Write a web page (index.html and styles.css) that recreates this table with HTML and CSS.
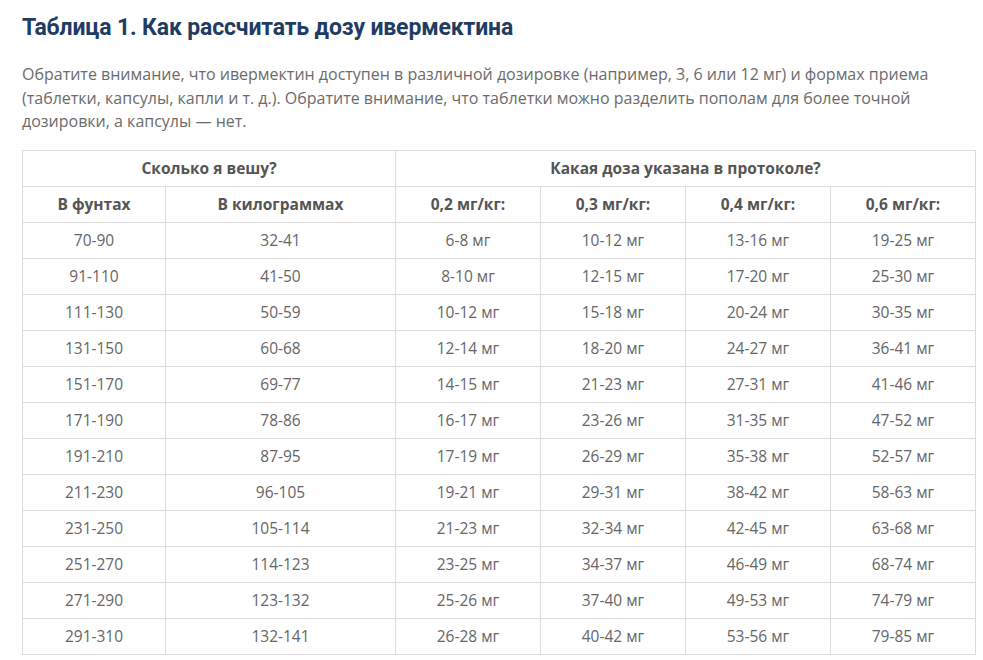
FILE: index.html
```html
<!DOCTYPE html>
<html lang="ru">
<head>
<meta charset="utf-8">
<link rel="stylesheet" href="styles.css">
</head>
<body>
<div class="page">
  <h2 class="title">Таблица 1. Как рассчитать дозу ивермектина</h2>
  <p class="intro">Обратите внимание, что ивермектин доступен в различной дозировке (например, 3, 6 или 12 мг) и формах приема (таблетки, капсулы, капли и т. д.). Обратите внимание, что таблетки можно разделить пополам для более точной дозировки, а капсулы — нет.</p>
  <table class="dose">
    <colgroup>
      <col class="c1"><col class="c2"><col class="c3"><col class="c3"><col class="c3"><col class="c3">
    </colgroup>
    <thead>
      <tr><th colspan="2">Сколько я вешу?</th><th colspan="4">Какая доза указана в протоколе?</th></tr>
      <tr><th>В фунтах</th><th>В килограммах</th><th>0,2 мг/кг:</th><th>0,3 мг/кг:</th><th>0,4 мг/кг:</th><th>0,6 мг/кг:</th></tr>
    </thead>
    <tbody>
      <tr><td>70-90</td><td>32-41</td><td>6-8 мг</td><td>10-12 мг</td><td>13-16 мг</td><td>19-25 мг</td></tr>
      <tr><td>91-110</td><td>41-50</td><td>8-10 мг</td><td>12-15 мг</td><td>17-20 мг</td><td>25-30 мг</td></tr>
      <tr><td>111-130</td><td>50-59</td><td>10-12 мг</td><td>15-18 мг</td><td>20-24 мг</td><td>30-35 мг</td></tr>
      <tr><td>131-150</td><td>60-68</td><td>12-14 мг</td><td>18-20 мг</td><td>24-27 мг</td><td>36-41 мг</td></tr>
      <tr><td>151-170</td><td>69-77</td><td>14-15 мг</td><td>21-23 мг</td><td>27-31 мг</td><td>41-46 мг</td></tr>
      <tr><td>171-190</td><td>78-86</td><td>16-17 мг</td><td>23-26 мг</td><td>31-35 мг</td><td>47-52 мг</td></tr>
      <tr><td>191-210</td><td>87-95</td><td>17-19 мг</td><td>26-29 мг</td><td>35-38 мг</td><td>52-57 мг</td></tr>
      <tr><td>211-230</td><td>96-105</td><td>19-21 мг</td><td>29-31 мг</td><td>38-42 мг</td><td>58-63 мг</td></tr>
      <tr><td>231-250</td><td>105-114</td><td>21-23 мг</td><td>32-34 мг</td><td>42-45 мг</td><td>63-68 мг</td></tr>
      <tr><td>251-270</td><td>114-123</td><td>23-25 мг</td><td>34-37 мг</td><td>46-49 мг</td><td>68-74 мг</td></tr>
      <tr><td>271-290</td><td>123-132</td><td>25-26 мг</td><td>37-40 мг</td><td>49-53 мг</td><td>74-79 мг</td></tr>
      <tr><td>291-310</td><td>132-141</td><td>26-28 мг</td><td>40-42 мг</td><td>53-56 мг</td><td>79-85 мг</td></tr>
    </tbody>
  </table>
</div>
</body>
</html>
```
FILE: styles.css
```css
html, body {
  margin: 0;
  padding: 0;
  background: #fff;
}
.page {
  padding: 14px 0 0 22px;
  width: 954px;
  font-family: "Open Sans", "Liberation Sans", sans-serif;
}
.title {
  margin: 0;
  font-family: Roboto, "Liberation Sans", sans-serif;
  font-weight: 700;
  font-size: 23px;
  line-height: 28px;
  color: #1f3d63;
  letter-spacing: -0.15px;
}
.intro {
  margin: 21px 0 16px;
  font-size: 16px;
  line-height: 23.5px;
  color: #6b6b6b;
}
.dose {
  width: 954px;
  border-collapse: collapse;
  table-layout: fixed;
  font-size: 15.5px;
  color: #5a5a5a;
}
.c1 { width: 143px; }
.c2 { width: 230px; }
.c3 { width: 145px; }
.dose th, .dose td {
  border: 1px solid #dcdcdc;
  height: 35px;
  padding: 0;
  text-align: center;
  vertical-align: middle;
  line-height: 20px;
}
.dose th {
  font-weight: 700;
  color: #555;
}
.dose td {
  font-weight: 400;
  color: #666;
}
```
